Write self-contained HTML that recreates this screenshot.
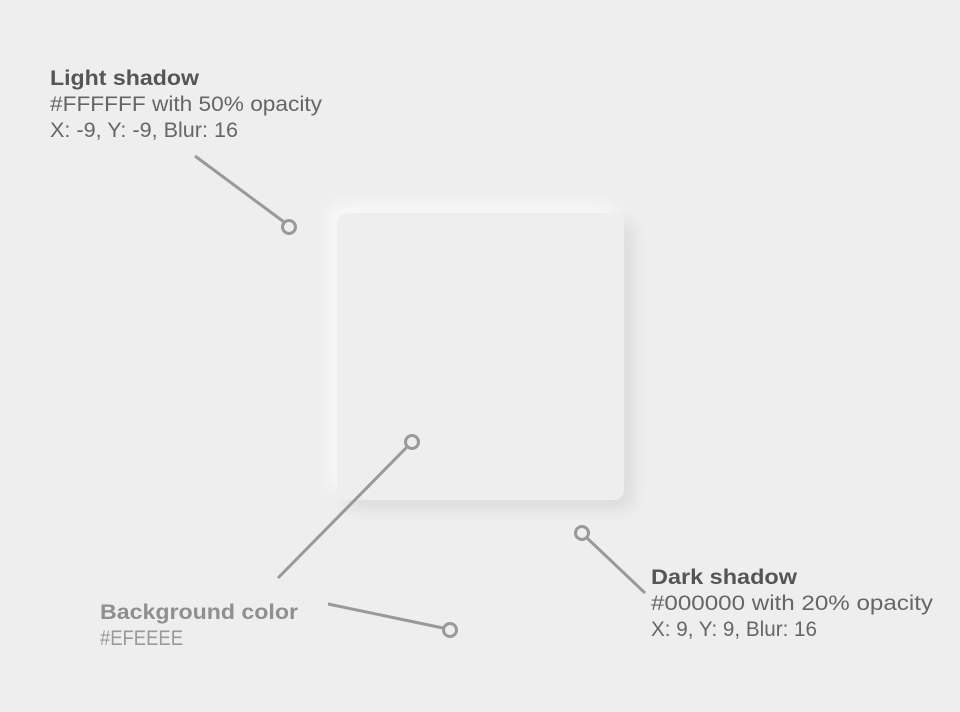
<!DOCTYPE html>
<html><head><meta charset="utf-8"><style>
html,body{margin:0;padding:0;background:#EFEEEE;}
.box{position:absolute;left:337px;top:213px;width:287px;height:287px;border-radius:10px;background:#EFEEEE;box-shadow:-9px -9px 16px rgba(255,255,255,.6),9px 9px 16px rgba(0,0,0,.08);}
svg{position:absolute;left:0;top:0;}
text{font-family:"Liberation Sans",sans-serif;font-size:21px;}
</style></head><body>
<div class="box"></div>
<svg width="960" height="712" viewBox="0 0 960 712">
<g stroke="#999" stroke-width="3" fill="none">
<line x1="195" y1="156" x2="284" y2="222"/>
<circle cx="289" cy="227" r="6.5" fill="#EFEEEE"/>
<line x1="278" y1="578" x2="407" y2="447"/>
<circle cx="412" cy="442" r="6.5" fill="#EFEEEE"/>
<line x1="328" y1="604" x2="443" y2="628"/>
<circle cx="450" cy="630" r="6.5" fill="#EFEEEE"/>
<line x1="645" y1="593" x2="587" y2="538"/>
<circle cx="582" cy="533" r="6.5" fill="#EFEEEE"/>
</g>
<g fill="#555">
<text x="50" y="85" font-weight="bold" textLength="149" lengthAdjust="spacingAndGlyphs">Light shadow</text>
<text x="50" y="111" textLength="272" lengthAdjust="spacingAndGlyphs" fill="#666">#FFFFFF with 50% opacity</text>
<text x="50" y="137" textLength="188" lengthAdjust="spacingAndGlyphs" fill="#666">X: -9, Y: -9, Blur: 16</text>
<text x="651" y="584" font-weight="bold" textLength="146" lengthAdjust="spacingAndGlyphs">Dark shadow</text>
<text x="651" y="610" textLength="282" lengthAdjust="spacingAndGlyphs" fill="#666">#000000 with 20% opacity</text>
<text x="651" y="636" textLength="166" lengthAdjust="spacingAndGlyphs" fill="#666">X: 9, Y: 9, Blur: 16</text>
</g>
<g fill="#999">
<text x="100" y="619" font-weight="bold" textLength="198" lengthAdjust="spacingAndGlyphs" fill="#8f8f8f">Background color</text>
<text x="100" y="645" textLength="83" lengthAdjust="spacingAndGlyphs">#EFEEEE</text>
</g>
</svg>
</body></html>
